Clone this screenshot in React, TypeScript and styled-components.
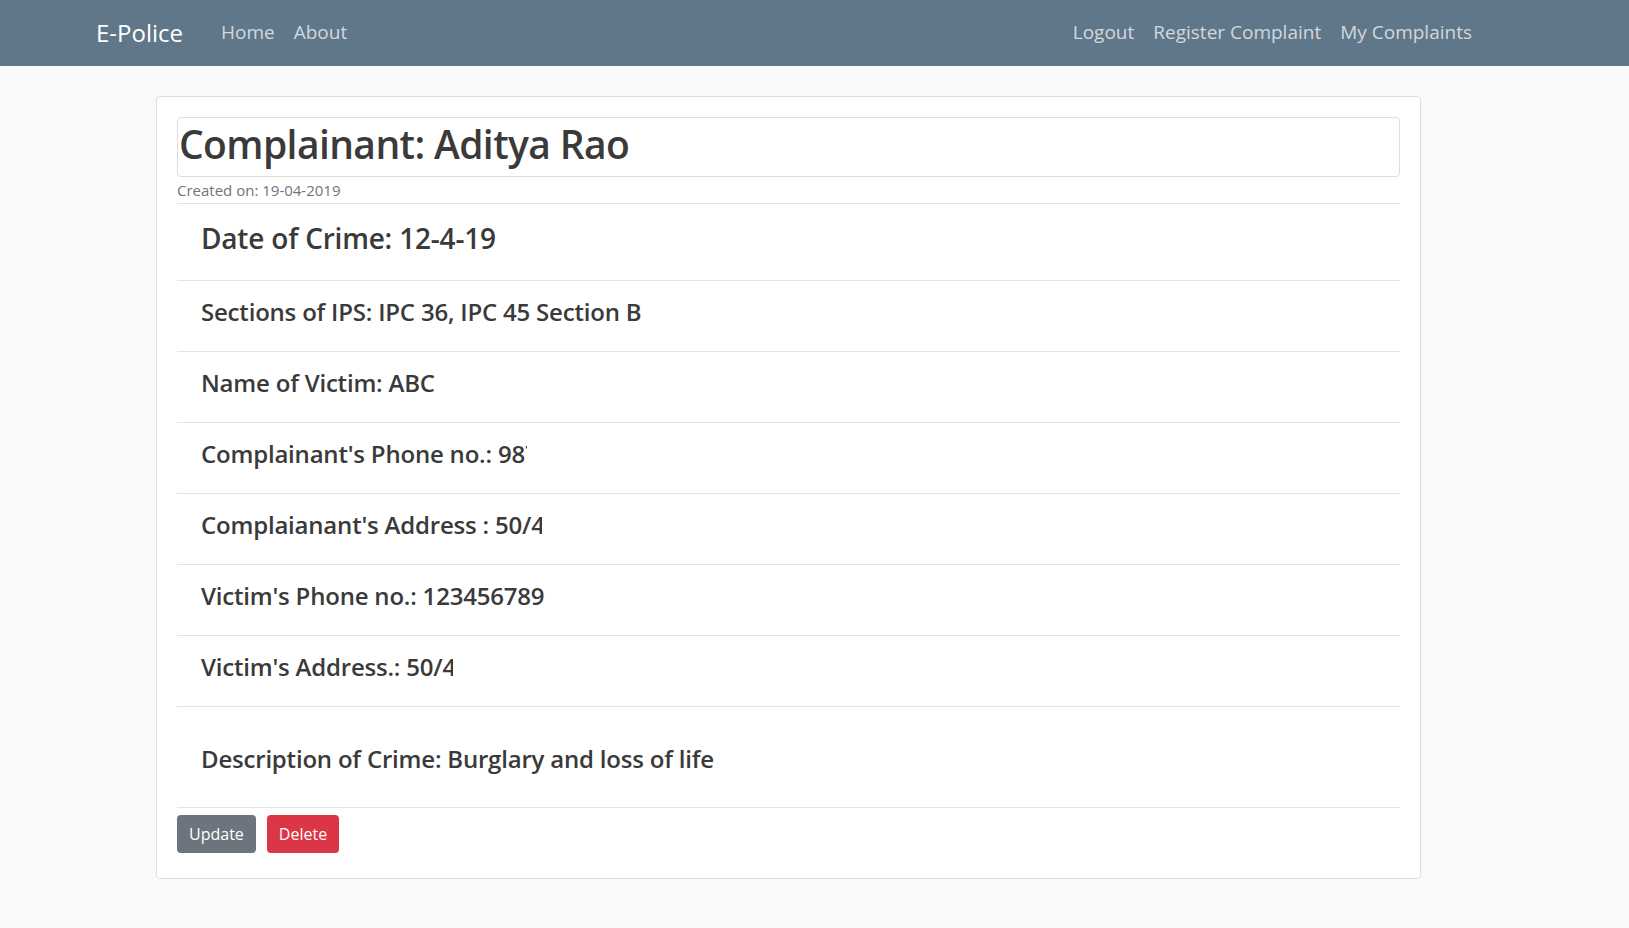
import React from "react";
import styled, { createGlobalStyle } from "styled-components";

const Global = createGlobalStyle`
  html, body { margin: 0; padding: 0; }
  body {
    background: #f9f9f9;
    font-family: "Segoe UI", "Open Sans", "Noto Sans", sans-serif;
    color: #3a3a3a;
  }
  * { box-sizing: border-box; }
`;

const NavBar = styled.nav`
  height: 66px;
  background: #607789;
  display: flex;
  align-items: center;
  padding: 0 157px 2px 96px;
`;

const Brand = styled.a`
  font-size: 24px;
  color: #ffffff;
  margin-right: 38px;
  text-decoration: none;
`;

const NavGroup = styled.div<{ $right?: boolean }>`
  display: flex;
  gap: 19px;
  margin-left: ${(p) => (p.$right ? "auto" : "0")};
`;

const NavLink = styled.a`
  font-size: 19px;
  color: rgba(255, 255, 255, 0.72);
  text-decoration: none;
`;

const Page = styled.main`
  padding: 30px 0 40px 156px;
`;

const Card = styled.section`
  width: 1265px;
  background: #fff;
  border: 1px solid #dedede;
  border-radius: 4px;
  padding: 20px 20px 25px 20px;
`;

const TitleBox = styled.h1`
  margin: 0;
  border: 1px solid #dedede;
  border-radius: 4px;
  font-size: 39px;
  font-weight: 600;
  letter-spacing: -0.6px;
  line-height: 48px;
  padding: 2px 0 8px 1px;
  color: #3a3a3a;
`;

const Created = styled.div`
  font-size: 15px;
  color: #6c757d;
  line-height: 19px;
  padding-top: 4px;
  padding-bottom: 3px;
  border-bottom: 1px solid #e2e2e2;
`;

const Row = styled.div<{ $size: number; $top: number; $bottom: number; $lh: number }>`
  border-bottom: 1px solid #e2e2e2;
  padding: ${(p) => p.$top}px 24px ${(p) => p.$bottom}px;
  font-size: ${(p) => p.$size}px;
  line-height: ${(p) => p.$lh}px;
  font-weight: 600;
  letter-spacing: -0.2px;
`;

const Clip = styled.span<{ $w: number }>`
  display: inline-block;
  vertical-align: bottom;
  white-space: nowrap;
  overflow: hidden;
  width: ${(p) => p.$w}px;
`;

const Actions = styled.div`
  display: flex;
  gap: 11px;
  padding-top: 7px;
`;

const Button = styled.button<{ $variant: "secondary" | "danger" }>`
  font-family: inherit;
  font-size: 16px;
  line-height: 24px;
  padding: 7px 12px;
  border: none;
  border-radius: 4px;
  color: #fff;
  background: ${(p) => (p.$variant === "danger" ? "#dc3545" : "#6c757d")};
`;

const fields: { text: string; value?: string; clip?: number }[] = [
  { text: "Sections of IPS: IPC 36, IPC 45 Section B" },
  { text: "Name of Victim: ABC" },
  { text: "Complainant's Phone no.: ", value: "9876543210", clip: 29 },
  { text: "Complaianant's Address : ", value: "50/4, Sector 12", clip: 47 },
  { text: "Victim's Phone no.: 123456789" },
  { text: "Victim's Address.: ", value: "50/4, Sector 12", clip: 47 },
];

export default function App() {
  return (
    <>
      <Global />
      <NavBar>
        <Brand>E-Police</Brand>
        <NavGroup>
          <NavLink>Home</NavLink>
          <NavLink>About</NavLink>
        </NavGroup>
        <NavGroup $right>
          <NavLink>Logout</NavLink>
          <NavLink>Register Complaint</NavLink>
          <NavLink>My Complaints</NavLink>
        </NavGroup>
      </NavBar>
      <Page>
        <Card>
          <TitleBox>Complainant: Aditya Rao</TitleBox>
          <Created>Created on: 19-04-2019</Created>
          <Row $size={28} $lh={34} $top={17} $bottom={25}>Date of Crime: 12-4-19</Row>
          {fields.map((f) => (
            <Row key={f.text} $size={24} $lh={28} $top={17} $bottom={25}>
              {f.text}
              {f.value && <Clip $w={f.clip ?? 0}>{f.value}</Clip>}
            </Row>
          ))}
          <Row $size={24} $lh={28} $top={38} $bottom={34}>
            Description of Crime: Burglary and loss of life
          </Row>
          <Actions>
            <Button $variant="secondary">Update</Button>
            <Button $variant="danger">Delete</Button>
          </Actions>
        </Card>
      </Page>
    </>
  );
}
